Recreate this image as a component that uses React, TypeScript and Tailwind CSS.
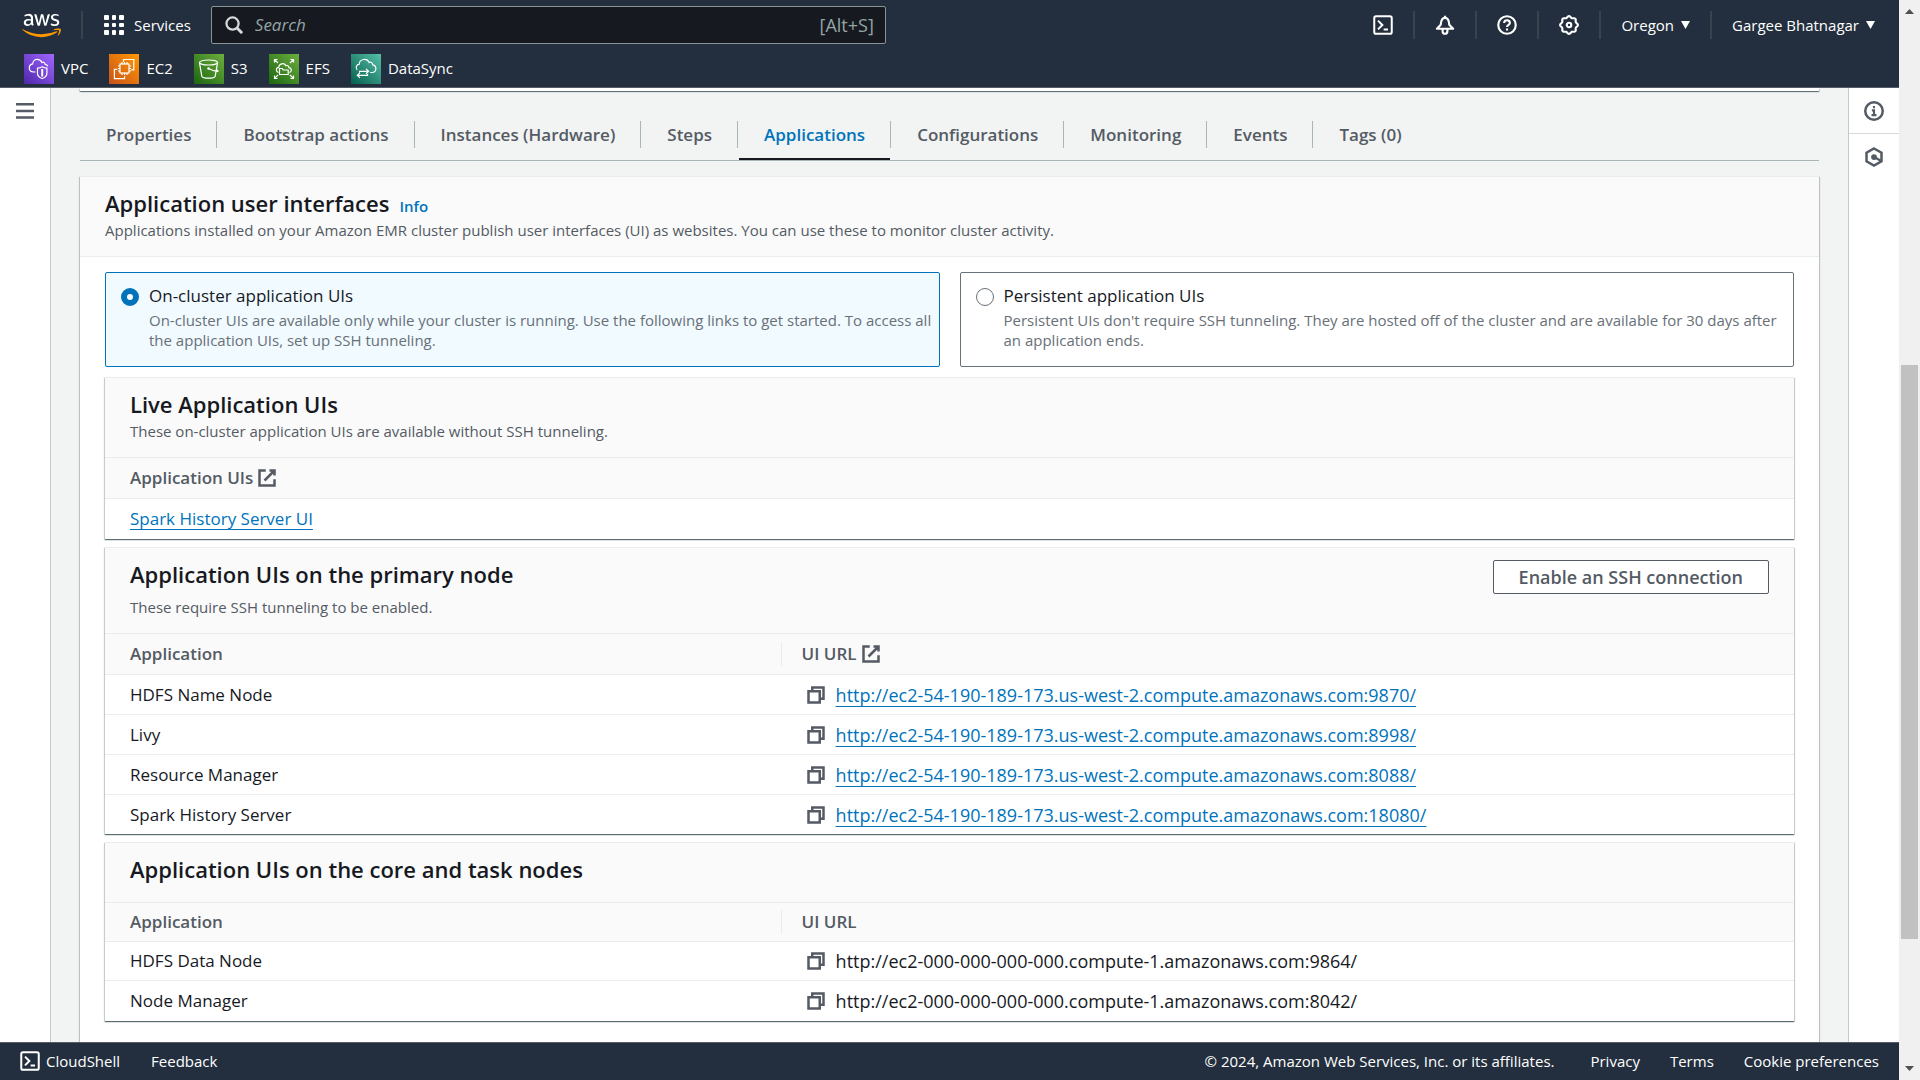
import React, { useState } from "react";
import type { ReactNode } from "react";
import { FaAws } from "react-icons/fa";

const service = "size-[30px] shrink-0";

function Tile({ id, from, to, children }: { id: string; from: string; to: string; children: ReactNode }) {
  return (
    <svg className={service} viewBox="0 0 30 30" fill="none" stroke="#fff" strokeWidth="1.2" aria-hidden="true">
      <defs>
        <linearGradient id={id} x1="0" y1="1" x2="1" y2="0">
          <stop offset="0" stopColor={from} />
          <stop offset="1" stopColor={to} />
        </linearGradient>
      </defs>
      <rect width="30" height="30" fill={`url(#${id})`} stroke="none" />
      {children}
    </svg>
  );
}

const favorites = [
  {
    name: "VPC",
    icon: (
      <Tile id="vpc" from="#4d27aa" to="#a166ff">
        <path d="M11.500 18H9.600C7 17.800 5.300 16.200 5.300 14c0-2.200 1.400-3.700 3.400-4.100C8.700 7.200 10.800 5.400 13.300 5.400c2.400 0 3.900 1.300 4.700 3.200 1.300-.9 3-.1 3.200 1.800 1.300.3 2.200.9 2.600 1.800" />
        <path d="M18.200 12.700c1.500 1 3 1.400 4.700 1.500v5.200c0 2.300-1.800 4-4.700 5.100-2.900-1.100-4.700-2.800-4.700-5.100v-5.200c1.700-.1 3.200-.5 4.700-1.500z" />
        <path d="M18.200 15v7.500" strokeWidth="2" />
      </Tile>
    ),
  },
  {
    name: "EC2",
    icon: (
      <Tile id="ec2" from="#c8511b" to="#ff9900">
        <path d="M14.500 8V5.500h10.300v10.300h-2.600M15.600 22.200v2.500H5.400V15.300h3" />
        <rect x="11" y="10" width="9" height="9" />
        <path d="M13 10V8M15.500 10V8M18 10V8M13 21v-2M15.500 21v-2M18 21v-2M11 12H9M11 14.500H9M11 17H9M22 12h-2M22 14.500h-2M22 17h-2" />
      </Tile>
    ),
  },
  {
    name: "S3",
    icon: (
      <Tile id="s3" from="#1b660f" to="#6cae3e">
        <ellipse cx="14.500" cy="8.500" rx="9" ry="2.500" />
        <path d="M5.500 8.800l2.300 13.400c.5 1.300 3.200 2 6.700 2s6.200-.7 6.700-2l2.300-13.400M14.500 14.500c3.500 1.800 6.500 2.700 8.600 2.900 1.400.1 1.500-.7-.8-1.900" />
        <circle cx="14.500" cy="14.500" r="1.200" fill="#fff" stroke="none" />
      </Tile>
    ),
  },
  {
    name: "EFS",
    icon: (
      <Tile id="efs" from="#1b660f" to="#6cae3e">
        <path d="M5.500 8.500v-3h3M5.500 5.500l3.500 3.500M21.500 5.500h3v3M24.500 5.500L21 9M5.500 21.500v3h3M5.500 24.500L9 21M24.500 21.500v3h-3M24.500 24.500L21 21" />
        <path d="M9.600 18.500c-3-.9-2.900-4.800.1-5.200.2-3.600 5.500-5 7.200-1.600 1.600-.8 3 .2 2.900 1.700 3.200.6 3.300 4.300.6 5.100" />
        <path d="M10.500 20.500v-6h2.700l1 1.500h5v4.500z" />
      </Tile>
    ),
  },
  {
    name: "DataSync",
    icon: (
      <Tile id="datasync" from="#055f4e" to="#56c0a7">
        <path d="M6.300 16c-2.200-2.200-.9-5.400 2-5.800.1-5.400 8-6.600 9.700-1.800 1.900-1 3.700.2 3.700 2.400 4.500.9 4.200 7.600-.8 7.700h-1.700" />
        <path d="M8.500 18.500v-1.200h8.700M15 14.900l2.600 2.400-2.600 2.400M16.500 20v1.300H6.600M8.900 18.900l-2.600 2.400 2.600 2.400" />
      </Tile>
    ),
  },
];

const stroke16 = { viewBox: "0 0 16 16", fill: "none", stroke: "currentColor", strokeWidth: 2, "aria-hidden": true } as const;

const gearOutline =
  Array.from({ length: 96 }, (_, i) => {
    const a = (i / 96) * Math.PI * 2;
    const r = 6.5 + 0.6 * Math.cos(a * 8);
    return `${i ? "L" : "M"}${(8 + r * Math.cos(a)).toFixed(2)} ${(8 + r * Math.sin(a)).toFixed(2)}`;
  }).join("") + "Z";

const ShellIcon = () => (
  <svg className="size-5" {...stroke16} strokeWidth={1.6}>
    <rect x="1" y="1" width="14" height="14" rx="1.500" />
    <path d="M4 4.500L7.500 8 4 11.500M8.500 11.500H12" />
  </svg>
);
const BellIcon = () => (
  <svg className="size-5" {...stroke16} strokeWidth={1.700} strokeLinejoin="round">
    <path d="M8 .5v1.500M4.600 7.800C4.800 4 5.800 2.300 8 2.300s3.200 1.700 3.400 5.500L14.500 11h-13zM6.100 11.500v1.600a1.900 1.900 0 0 0 3.800 0v-1.600" />
  </svg>
);
const HelpIcon = () => (
  <svg className="size-5" {...stroke16} strokeWidth={1.700}>
    <circle cx="8" cy="8" r="7" />
    <path d="M5.700 6.400C5.700 5 6.700 4.200 8 4.200s2.300.8 2.300 2.100c0 1.700-2.300 1.500-2.300 3.300M8 10.700v1.700" />
  </svg>
);
const GearIcon = () => (
  <svg className="size-5" {...stroke16} strokeWidth={1.700}>
    <path d={gearOutline} />
    <circle cx="8" cy="8" r="1.800" />
  </svg>
);
const InfoIcon = () => (
  <svg className="size-5" {...stroke16}>
    <circle cx="8" cy="8" r="7" />
    <path d="M8 4v1.800M6.300 7.500H8v3.700M6 11.300h4" strokeWidth="1.700" />
  </svg>
);
const HexIcon = () => (
  <svg className="size-5" {...stroke16}>
    <path d="M8 1.200l6 3.400v6.800l-6 3.400-6-3.400V4.600z" />
    <circle cx="8" cy="8" r="2.300" fill="currentColor" stroke="none" />
    <path d="M8 8l5.500 3" />
  </svg>
);
const ExternalIcon = () => (
  <svg className="size-5 shrink-0" {...stroke16}>
    <path d="M10 2h4v4M6 10l8-8M14 9v5H2V2h5" />
  </svg>
);
const CopyIcon = () => (
  <svg className="size-5" {...stroke16}>
    <path d="M2 5h9v9H2zM5 5V2h9v9h-3" />
  </svg>
);
const Caret = () => (
  <svg className="h-2 w-[9px]" viewBox="0 0 9 8" fill="currentColor" aria-hidden="true">
    <path d="M0 0h9L4.500 8z" />
  </svg>
);

const Divider = () => <span className="h-7 w-0.5 bg-[#3a424e]" />;

const tabs = ["Properties", "Bootstrap actions", "Instances (Hardware)", "Steps", "Applications", "Configurations", "Monitoring", "Events", "Tags (0)"];

const host = "http://ec2-54-190-189-173.us-west-2.compute.amazonaws.com";
const primaryRows = [
  ["HDFS Name Node", `${host}:9870/`],
  ["Livy", `${host}:8998/`],
  ["Resource Manager", `${host}:8088/`],
  ["Spark History Server", `${host}:18080/`],
];
const coreRows = [
  ["HDFS Data Node", "http://ec2-000-000-000-000.compute-1.amazonaws.com:9864/"],
  ["Node Manager", "http://ec2-000-000-000-000.compute-1.amazonaws.com:8042/"],
];

const modes = [
  {
    id: "on-cluster",
    title: "On-cluster application UIs",
    text: "On-cluster UIs are available only while your cluster is running. Use the following links to get started. To access all the application UIs, set up SSH tunneling.",
  },
  {
    id: "persistent",
    title: "Persistent application UIs",
    text: "Persistent UIs don't require SSH tunneling. They are hosted off of the cluster and are available for 30 days after an application ends.",
  },
];

const panel =
  "border-t border-[#eaeded] bg-white shadow-[0_1px_1px_0_rgba(0,28,36,0.5),1px_1px_1px_0_rgba(0,28,36,0.15),-1px_1px_1px_0_rgba(0,28,36,0.15)]";
const link = "text-[#0073bb] underline decoration-1 underline-offset-4 [text-decoration-skip-ink:none]";

function PanelHeader({ title, info, text, action }: { title: string; info?: boolean; text?: string; action?: ReactNode }) {
  return (
    <div className="border-b border-[#eaeded] bg-[#fafafa] px-[25px] pt-3 pb-4">
      <div className="flex items-start justify-between">
        <div className="flex items-baseline gap-2.5">
          <h2 className="text-[22px] leading-7 font-semibold text-[#16191f]">{title}</h2>
          {info && (
            <a href="#info" className="text-[15px] leading-5 font-semibold text-[#0073bb]">
              Info
            </a>
          )}
        </div>
        {action}
      </div>
      <p className="mt-[3px] text-[15px] leading-5">{text}</p>
    </div>
  );
}

function UrlTable({ rows, linked }: { rows: string[][]; linked?: boolean }) {
  return (
    <table className="w-full table-fixed border-separate border-spacing-0 text-left text-[17px] leading-6">
      <thead className="bg-[#fafafa]">
        <tr>
          <th scope="col" className={`w-2/5 border-b border-[#eaeded] pl-[25px] font-semibold ${linked ? "h-[41px]" : "h-[39px]"}`}>
            Application
          </th>
          <th scope="col" className="border-b border-[#eaeded] p-0 font-semibold">
            <span className="flex items-center gap-1 border-l border-[#eaeded] pl-5">
              UI URL {linked && <ExternalIcon />}
            </span>
          </th>
        </tr>
      </thead>
      <tbody className="text-[#16191f]">
        {rows.map(([name, url]) => (
          <tr key={name} className="group">
            <td
              className={`border-b border-[#eaeded] pl-[25px] group-last:border-b-0 ${linked ? "h-10 group-last:h-[39px]" : "h-[39px] group-last:h-10"}`}
            >
              {name}
            </td>
            <td className="border-b border-[#eaeded] p-0 pl-[25px] group-last:border-b-0">
              <span className="flex items-center gap-2.5">
                <button type="button" aria-label={`Copy ${url}`} className="text-[#545b64]">
                  <CopyIcon />
                </button>
                {linked ? (
                  <a href={url} className={`text-[18px] ${link}`}>
                    {url}
                  </a>
                ) : (
                  <span className="text-[18px]">{url}</span>
                )}
              </span>
            </td>
          </tr>
        ))}
      </tbody>
    </table>
  );
}

function Header() {
  return (
    <header className="border-b border-[#545b64] bg-[#232f3e] text-[15px] leading-5 font-medium text-white">
      <div className="flex h-[50px] items-center pr-6 pl-[22px]">
        <svg className="absolute size-0" aria-hidden="true">
          <linearGradient id="aws-logo" x1="0" y1="0" x2="0" y2="1">
            <stop offset="0.62" stopColor="#fff" />
            <stop offset="0.62" stopColor="#ff9900" />
          </linearGradient>
        </svg>
        <a href="#home" aria-label="AWS" className="mr-5">
          <FaAws className="h-[31px] w-[39px]" fill="url(#aws-logo)" />
        </a>
        <Divider />
        <button type="button" className="ml-[21px] flex items-center gap-2.5">
          <span className="grid size-5 grid-cols-3 gap-[3px]">
            {Array.from({ length: 9 }, (_, i) => (
              <span key={i} className="rounded-[1px] bg-white" />
            ))}
          </span>
          Services
        </button>
        <label className="ml-5 flex h-[38px] w-[675px] items-center gap-3 rounded-xs border border-[#879596] bg-[#16191f] px-[11px]">
          <svg className="ml-0.5 size-[18px] text-[#d5dbdb]" {...stroke16}>
            <circle cx="6.700" cy="6.700" r="5.400" />
            <path d="M10.500 10.500l4.700 4.700" strokeWidth="2.600" />
          </svg>
          <input
            type="text"
            aria-label="Search"
            placeholder="Search"
            className="min-w-0 flex-1 bg-transparent text-[17px] font-normal outline-none placeholder:text-[#95a5a6] placeholder:italic"
          />
          <span className="text-[18px] font-normal text-[#95a5a6]">[Alt+S]</span>
        </label>
        <nav aria-label="Account" className="ml-auto flex items-center gap-5">
          <button type="button" aria-label="CloudShell"><ShellIcon /></button>
          <Divider />
          <button type="button" aria-label="Notifications"><BellIcon /></button>
          <Divider />
          <button type="button" aria-label="Help"><HelpIcon /></button>
          <Divider />
          <button type="button" aria-label="Settings"><GearIcon /></button>
          <Divider />
          <button type="button" className="flex items-center gap-[7px]">Oregon <Caret /></button>
          <Divider />
          <button type="button" className="flex items-center gap-[7px]">Gargee Bhatnagar <Caret /></button>
        </nav>
      </div>
      <nav aria-label="Favorites" className="flex items-center gap-[21px] px-6 pt-1 pb-[3px]">
        {favorites.map((f) => (
          <a key={f.name} href={`#${f.name}`} className="flex items-center gap-[7px]">
            {f.icon}
            <span className="pb-0.5">{f.name}</span>
          </a>
        ))}
      </nav>
    </header>
  );
}

export default function App() {
  const [mode, setMode] = useState("on-cluster");
  const [tab, setTab] = useState("Applications");

  return (
    <div className="flex h-screen overflow-hidden font-['Open_Sans',sans-serif] text-[#545b64]">
      <div className="flex min-w-0 flex-1 flex-col">
        <Header />
        <div className="flex min-h-0 flex-1">
          <aside className="w-[51px] shrink-0 border-r border-[#c3c9cb] bg-white pt-[15px] pl-4">
            <button type="button" aria-label="Open navigation" className="block">
              <svg className="h-4 w-[18px]" viewBox="0 0 18 16" fill="currentColor" aria-hidden="true">
                <path d="M0 0h18v2.500H0zM0 6.700h18v2.500H0zM0 13.300h18v2.500H0z" />
              </svg>
            </button>
          </aside>

          <main className="min-w-0 flex-1 overflow-hidden bg-[#f2f3f3] px-[29px]">
            <div className="h-[3px] bg-white shadow-[0_1px_1px_0_rgba(0,28,36,0.5),1px_1px_1px_0_rgba(0,28,36,0.15),-1px_1px_1px_0_rgba(0,28,36,0.15)]" />
            <div role="tablist" className="mt-[18px] flex items-center border-b border-[#aab7b8] text-[17px] leading-6 font-semibold">
              {tabs.map((t, i) => (
                <div key={t} className="flex items-center gap-px pl-px">
                  {i > 0 && <span className="-ml-px h-[27px] w-px bg-[#aab7b8]" />}
                  <button
                    type="button"
                    role="tab"
                    aria-selected={t === tab}
                    onClick={() => setTab(t)}
                    className={`h-[51px] border-y-2 border-t-transparent px-[25px] ${t === tab ? "border-b-[#16191f] text-[#0073bb]" : "border-b-transparent"}`}
                  >
                    {t}
                  </button>
                </div>
              ))}
            </div>

            <section className={`mt-[15px] pb-10 ${panel}`}>
              <PanelHeader
                info
                title="Application user interfaces"
                text="Applications installed on your Amazon EMR cluster publish user interfaces (UI) as websites. You can use these to monitor cluster activity."
              />
              <div className="px-[25px] pt-[15px]">
                <div className="grid grid-cols-2 gap-5">
                  {modes.map((m) => (
                    <label
                      key={m.id}
                      className={`flex gap-2.5 rounded-xs border py-[11px] pl-[15px] ${mode === m.id ? "border-[#0073bb] bg-[#f1faff]" : "border-[#687078] bg-white"}`}
                    >
                      <input
                        type="radio"
                        name="mode"
                        checked={mode === m.id}
                        onChange={() => setMode(m.id)}
                        className="mt-1 size-[18px] shrink-0 appearance-none rounded-full border border-[#687078] bg-white checked:border-[6px] checked:border-[#0073bb]"
                      />
                      <span className="pb-[5px]">
                        <span className="block text-[17px] leading-6 text-[#16191f]">{m.title}</span>
                        <span className="mt-0.5 block text-[15px] leading-5 text-[#687078]">{m.text}</span>
                      </span>
                    </label>
                  ))}
                </div>

                <div className="mt-2.5 flex flex-col gap-2">
                  <section className={panel}>
                    <PanelHeader title="Live Application UIs" text="These on-cluster application UIs are available without SSH tunneling." />
                    <table className="w-full border-separate border-spacing-0 text-left text-[17px] leading-6">
                      <thead className="bg-[#fafafa]">
                        <tr>
                          <th scope="col" className="h-[41px] border-b border-[#eaeded] pl-[25px] font-semibold">
                            <span className="flex items-center gap-1">
                              Application UIs <ExternalIcon />
                            </span>
                          </th>
                        </tr>
                      </thead>
                      <tbody>
                        <tr>
                          <td className="h-10 pl-[25px]">
                            <a href="#spark-history-server" className={link}>
                              Spark History Server UI
                            </a>
                          </td>
                        </tr>
                      </tbody>
                    </table>
                  </section>

                  <section className={panel}>
                    <PanelHeader
                      title="Application UIs on the primary node"
                      text="These require SSH tunneling to be enabled."
                      action={
                        <button type="button" className="rounded-xs border border-[#545b64] bg-white px-[25px] py-1 text-[18px] leading-6 font-semibold">
                          Enable an SSH connection
                        </button>
                      }
                    />
                    <UrlTable rows={primaryRows} linked />
                  </section>

                  <section className={panel}>
                    <PanelHeader title="Application UIs on the core and task nodes" />
                    <UrlTable rows={coreRows} />
                  </section>
                </div>
              </div>
            </section>
          </main>

          <aside className="flex w-[51px] shrink-0 flex-col border-l border-[#c3c9cb] bg-white">
            <button type="button" aria-label="Help panel" className="flex h-[46px] items-center justify-center border-b border-[#d5dbdb]">
              <InfoIcon />
            </button>
            <button type="button" aria-label="Resources" className="flex h-[46px] items-center justify-center">
              <HexIcon />
            </button>
          </aside>
        </div>

        <footer className="flex h-[38px] items-center border-t border-[#545b64] bg-[#232f3e] px-5 pb-0.5 text-[15px] leading-5 font-medium text-white">
          <button type="button" className="flex items-center gap-1.5">
            <ShellIcon />
            CloudShell
          </button>
          <a href="#feedback" className="ml-[31px]">Feedback</a>
          <span className="ml-auto">© 2024, Amazon Web Services, Inc. or its affiliates.</span>
          <a href="#privacy" className="ml-9">Privacy</a>
          <a href="#terms" className="ml-[30px]">Terms</a>
          <a href="#cookies" className="ml-[30px]">Cookie preferences</a>
        </footer>
      </div>

      <div className="flex w-[21px] shrink-0 flex-col items-center bg-[#f0f0f0] text-[#505050]" aria-hidden="true">
        <svg className="mt-[9px] mb-2.5 h-[5px] w-[9px] shrink-0" viewBox="0 0 9 5" fill="currentColor">
          <path d="M0 5h9L4.500 0z" />
        </svg>
        <div className="flex-[341]" />
        <div className="w-[17px] flex-[574] bg-[#c1c1c1]" />
        <div className="flex-[117]" />
        <svg className="mt-2.5 mb-[9px] h-[5px] w-[9px] shrink-0" viewBox="0 0 9 5" fill="currentColor">
          <path d="M0 0h9L4.500 5z" />
        </svg>
      </div>
    </div>
  );
}
